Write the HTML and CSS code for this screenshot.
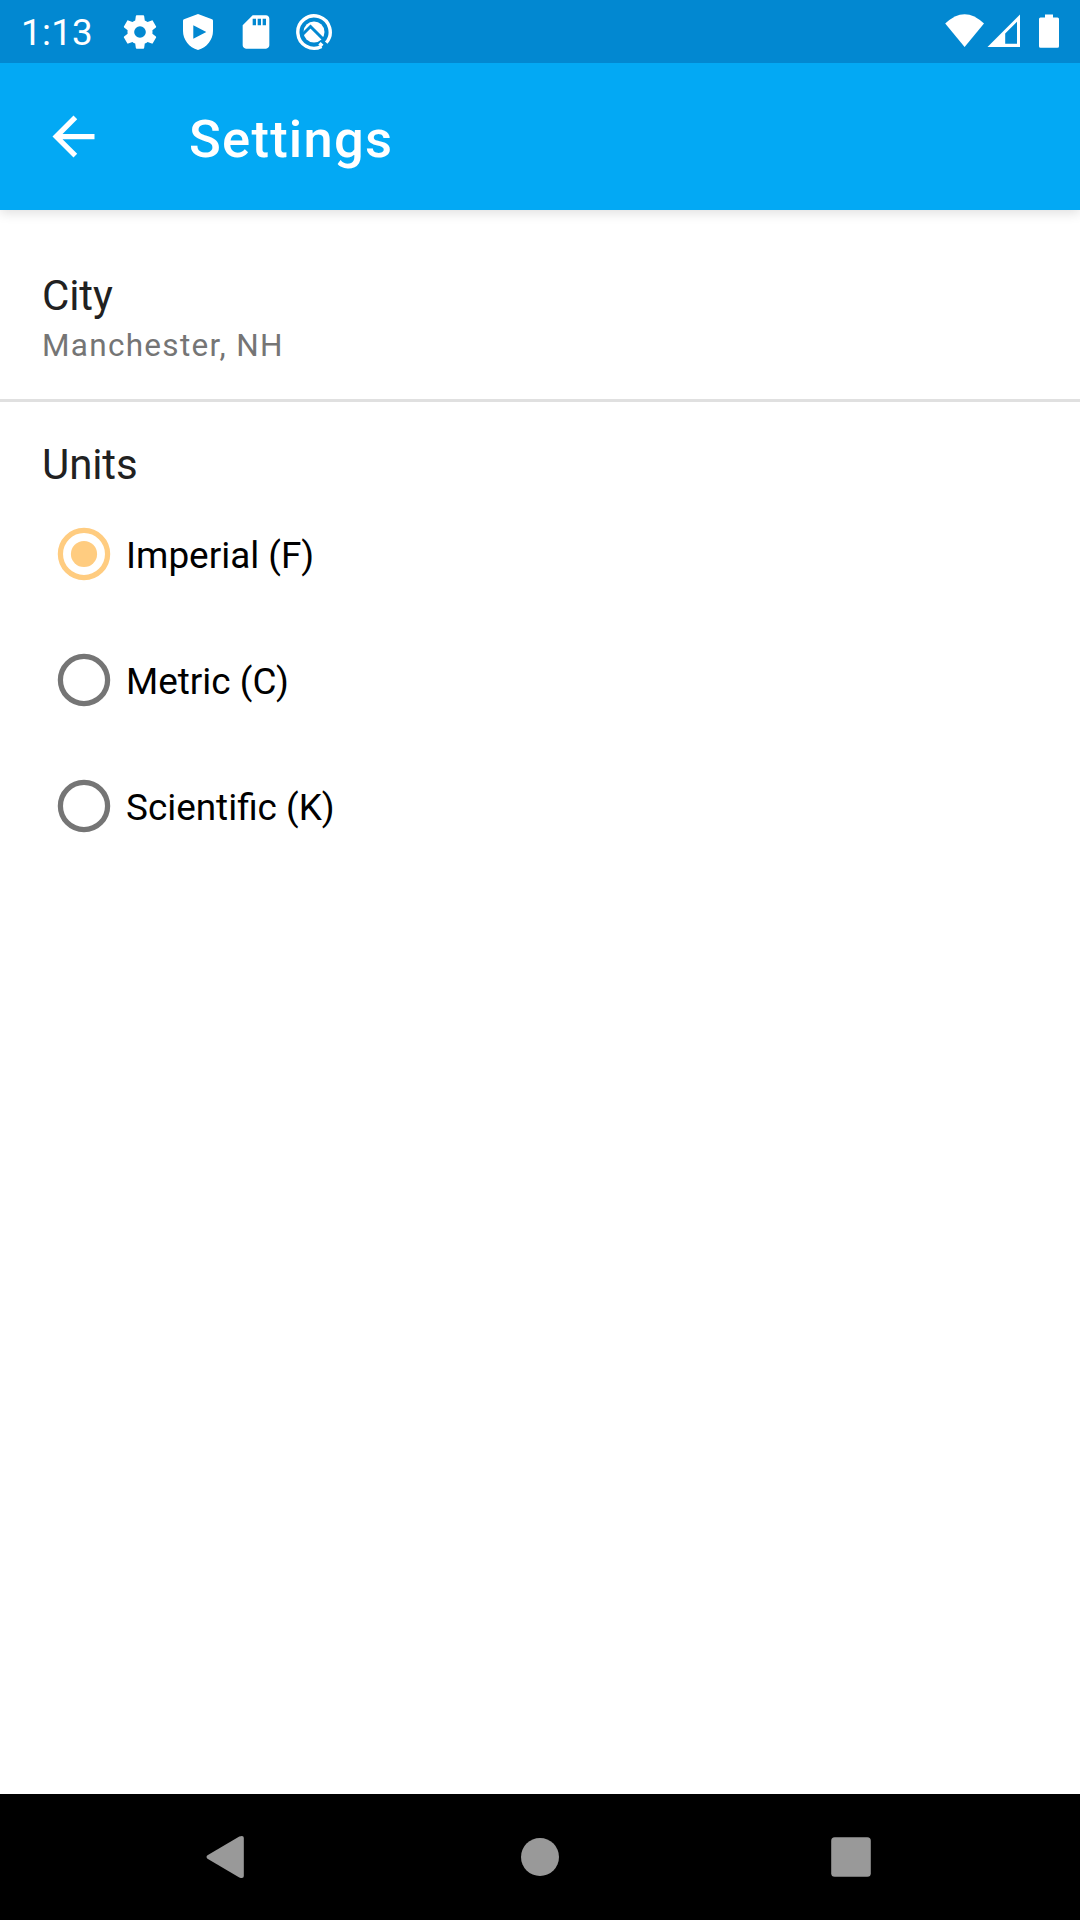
FILE: index.html
```html
<!DOCTYPE html>
<html lang="en">
<head>
<meta charset="utf-8">
<title>Settings</title>
<link rel="stylesheet" href="styles.css">
</head>
<body>
<div class="screen">
  <div class="status-bar">
    <span class="clock">1:13</span>
    <div class="notifications">
      <svg class="icon" viewBox="0 0 24 24"><path fill-rule="evenodd" d="M19.43 12.98c.04-.32.07-.64.07-.98s-.03-.66-.07-.98l2.11-1.65c.19-.15.24-.42.12-.64l-2-3.46c-.12-.22-.39-.3-.61-.22l-2.49 1c-.52-.4-1.08-.73-1.69-.98l-.38-2.65C14.46 2.18 14.25 2 14 2h-4c-.25 0-.46.18-.49.42l-.38 2.65c-.61.25-1.17.59-1.69.98l-2.49-1c-.23-.09-.49 0-.61.22l-2 3.46c-.13.22-.07.49.12.64l2.11 1.65c-.04.32-.07.65-.07.98s.03.66.07.98l-2.11 1.65c-.19.15-.24.42-.12.64l2 3.46c.12.22.39.3.61.22l2.49-1c.52.4 1.08.73 1.69.98l.38 2.65c.03.24.24.42.49.42h4c.25 0 .46-.18.49-.42l.38-2.65c.61-.25 1.17-.59 1.69-.98l2.49 1c.23.09.49 0 .61-.22l2-3.46c.12-.22.07-.49-.12-.64zM12 15.5a3.5 3.5 0 1 1 0-7 3.5 3.5 0 0 1 0 7z"/></svg>
      <svg class="icon" viewBox="0 0 40 40"><path fill-rule="evenodd" d="M20 2L34 7.2Q35 7.6 35 8.7V19C35 27.5 29 35.5 20 38C11 35.5 5 27.5 5 19V8.7Q5 7.6 6 7.2zM15.3 13.2V26.8L28.3 20z"/></svg>
      <svg class="icon" viewBox="0 0 24 24"><path d="M18 2h-8L4 8v12c0 1.1.9 2 2 2h12c1.1 0 2-.9 2-2V4c0-1.1-.9-2-2-2zm-6 6h-2V4h2zm3 0h-2V4h2zm3 0h-2V4h2z"/></svg>
      <svg class="icon" viewBox="0 0 40 40"><path class="ring" d="M28.3 34L25.5 31.2M27.5 34.4A16.2 16.2 0 1 1 32.2 30.7"/><circle cx="20" cy="20" r="10.5"/><path class="cut" d="M8.5 22.5L16.500 14.500L29 27"/></svg>
    </div>
    <svg class="system" viewBox="940 0 124 63"><path d="M945.2 23.6Q964.6 4.8 984 23.6L964.6 47z"/><path fill-rule="evenodd" d="M987.5 47L1020 14.5V47zM1005.2 33.5V43.7H1017V21.8z"/><path d="M1045 17.5V14.5H1053V17.5H1057.5Q1059 17.5 1059 19V46.3Q1059 47.8 1057.5 47.8H1040.5Q1039 47.8 1039 46.3V19Q1039 17.5 1040.5 17.5z"/></svg>
  </div>
  <header class="app-bar">
    <svg class="back" viewBox="0 0 24 24"><path d="M20 11H7.83l5.59-5.59L12 4l-8 8 8 8 1.41-1.41L7.83 13H20z"/></svg>
    <h1 class="title">Settings</h1>
  </header>
  <main class="content">
    <section class="city">
      <h2 class="label">City</h2>
      <p class="value">Manchester, NH</p>
    </section>
    <section class="units">
      <h2 class="label">Units</h2>
      <div class="options">
        <div class="option"><svg class="radio checked" viewBox="0 0 54 54"><circle class="outline" cx="27" cy="27" r="23.6"/><circle class="dot" cx="27" cy="27" r="13.1"/></svg><span class="name">Imperial (F)</span></div>
        <div class="option"><svg class="radio" viewBox="0 0 54 54"><circle class="outline" cx="27" cy="27" r="23.6"/></svg><span class="name">Metric (C)</span></div>
        <div class="option"><svg class="radio" viewBox="0 0 54 54"><circle class="outline" cx="27" cy="27" r="23.6"/></svg><span class="name">Scientific (K)</span></div>
      </div>
    </section>
  </main>
  <nav class="nav-bar">
    <svg viewBox="0 0 60 60"><path d="M8.5 28.3L40.3 9.5Q44.8 7.8 44.8 11V49Q44.8 52.2 40.3 50.5L8.5 31.8Q6.5 30 8.5 28.3z"/></svg>
    <svg viewBox="0 0 60 60"><circle cx="30" cy="30" r="19"/></svg>
    <svg viewBox="0 0 60 60"><rect x="10.2" y="10.2" width="39.6" height="39.6" rx="3.5"/></svg>
  </nav>
</div>
</body>
</html>
```
FILE: styles.css
```css
* {
  box-sizing: border-box;
  margin: 0;
  padding: 0;
}

body {
  background: #fff;
  font-family: Roboto, sans-serif;
}

.screen {
  display: flex;
  flex-direction: column;
  width: 1080px;
  height: 1920px;
}

.status-bar {
  position: relative;
  z-index: 1;
  display: flex;
  align-items: center;
  height: 63px;
  padding: 0 16px 0 21px;
  background: #0288d1;
  color: #fff;
  fill: #fff;
}

.clock {
  width: 99px;
  padding-top: 3px;
  font-size: 36.75px;
  letter-spacing: 0.3px;
  line-height: 42px;
}

.notifications {
  display: flex;
  gap: 18px;
}

.icon {
  width: 40px;
  height: 40px;
}

.ring {
  fill: none;
  stroke: #fff;
  stroke-width: 3.4;
}

.cut {
  fill: none;
  stroke: #0288d1;
  stroke-width: 3;
}

.system {
  width: 124px;
  height: 63px;
  margin-left: auto;
}

.app-bar {
  position: relative;
  display: flex;
  align-items: center;
  height: 147px;
  padding-left: 42px;
  background: #03a9f4;
  color: #fff;
  fill: #fff;
  box-shadow: 0 3px 11px rgba(0, 0, 0, 0.13);
}

.back {
  width: 63px;
  height: 63px;
}

.title {
  margin-left: 84px;
  padding-top: 5px;
  font-size: 52.5px;
  font-weight: 500;
  letter-spacing: 1.25px;
  line-height: 64px;
}

.content {
  flex: 1;
}

.city {
  height: 192px;
  padding: 61px 42px 0;
  border-bottom: 3px solid #e0e0e0;
}

.label {
  color: #212121;
  font-size: 42px;
  font-weight: 400;
  letter-spacing: -0.1px;
  line-height: 50px;
}

.value {
  margin-top: 6px;
  color: #757575;
  font-size: 31.5px;
  letter-spacing: 1.3px;
  line-height: 38px;
}

.units {
  padding: 38px 42px 0;
}

.options {
  padding-top: 1px;
}

.option {
  display: flex;
  align-items: center;
  height: 126px;
  padding-left: 15px;
  color: #000;
  font-size: 36.9px;
}

.name {
  padding-top: 2px;
}

.radio {
  width: 54px;
  height: 54px;
  margin: 0 15px 1px 0;
}

.outline {
  fill: none;
  stroke: #757575;
  stroke-width: 5.25;
}

.checked .outline {
  stroke: #ffcc80;
}

.dot {
  fill: #ffcc80;
}

.nav-bar {
  display: flex;
  align-items: center;
  justify-content: center;
  gap: 251px;
  height: 126px;
  background: #000;
  fill: #999;
}

.nav-bar svg {
  width: 60px;
  height: 60px;
}
```
